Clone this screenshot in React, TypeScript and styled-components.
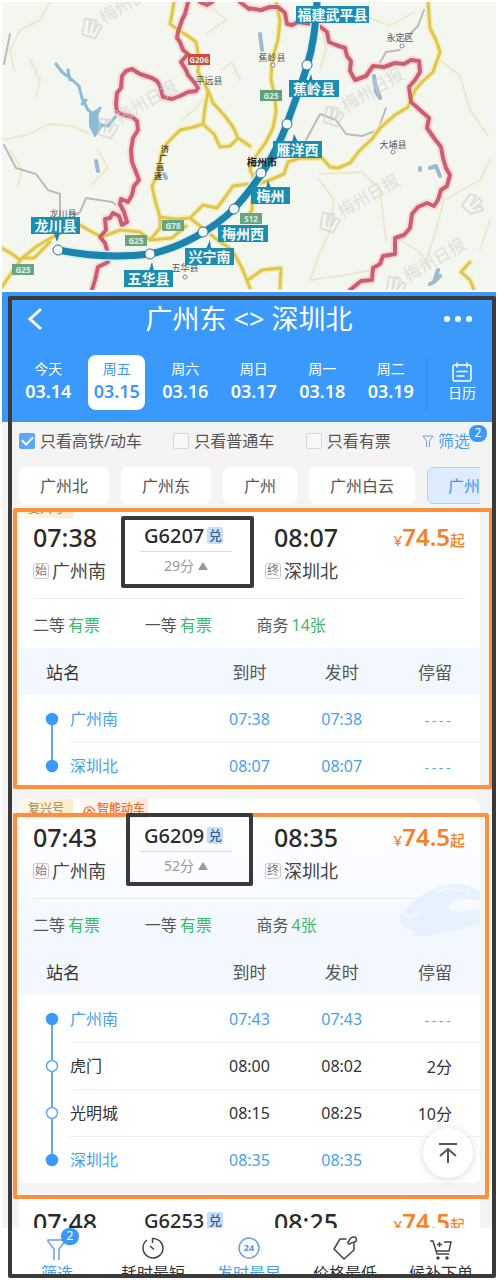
import React from "react";
import styled, { createGlobalStyle, css } from "styled-components";

const color = {
  blue: "#3b99fc",
  link: "#4a9ff0",
  ink: "#2b2b2b",
  text: "#555555",
  muted: "#999999",
  green: "#3dba6b",
  orange: "#f5822a",
  mark: "#ff8f3c",
  frame: "#3a3a3a",
  page: "#f4f4f4",
};

const Global = createGlobalStyle`
  * { box-sizing: border-box; }
  body {
    margin: 0;
    background: #fff;
    color: ${color.text};
    font-family: "Noto Sans", "Noto Sans CJK SC", sans-serif;
    font-size: 16px;
  }
  button { font: inherit; color: inherit; background: none; border: 0; padding: 0; margin: 0; cursor: pointer; }
  a { color: inherit; text-decoration: none; }
`;

const Page = styled.div`
  display: flex;
  flex-direction: column;
  gap: 2px;
  height: 100vh;
  padding: 2px;
`;

const MapSvg = styled.svg`
  display: block;
  width: 100%;
  height: auto;
  flex: none;
`;

const Phone = styled.main`
  position: relative;
  flex: 1;
  min-height: 0;
  display: flex;
  flex-direction: column;
  background: ${color.page};
  overflow: hidden;
`;

/* hand-drawn marker frames laid over the screen */
const Outline = styled.div<{ $c: string; $top: number; $left: number; $right?: number; $w?: number; $h?: number; $bottom?: number }>`
  position: absolute;
  pointer-events: none;
  border: 4px solid ${(p) => p.$c};
  border-radius: 2px;
  top: ${(p) => p.$top}px;
  left: ${(p) => p.$left}px;
  ${(p) => p.$right !== undefined && `right: ${p.$right}px;`}
  ${(p) => p.$bottom !== undefined && `bottom: ${p.$bottom}px;`}
  ${(p) => p.$w !== undefined && `width: ${p.$w}px;`}
  ${(p) => p.$h !== undefined && `height: ${p.$h}px;`}
`;

const Header = styled.header`
  flex: none;
  background: ${color.blue};
  color: #fff;
  padding-bottom: 12px;
`;

const TitleBar = styled.div`
  display: grid;
  grid-template-columns: 66px 1fr 66px;
  align-items: center;
  height: 54px;
  margin-bottom: 9px;
`;

const Title = styled.h1`
  margin: 0;
  font-size: 27px;
  font-weight: 400;
  line-height: 40px;
  text-align: center;
  white-space: nowrap;
`;

const IconButton = styled.button`
  display: grid;
  place-items: center;
  height: 40px;
`;

const DateBar = styled.div`
  display: flex;
  align-items: center;
  padding-left: 12px;
`;

const DateSlot = styled.div`
  flex: 1;
  display: flex;
  justify-content: center;
`;

const DateButton = styled.button<{ $on?: boolean }>`
  flex: none;
  width: 57px;
  height: 55px;
  border-radius: 8px;
  display: flex;
  flex-direction: column;
  align-items: center;
  padding-top: 4px;
  ${(p) => p.$on && css`background: #fff; color: ${color.blue};`}
`;

const DayName = styled.span`
  font-size: 14px;
  line-height: 20px;
`;

const DayDate = styled.span`
  font-size: 18px;
  font-weight: 600;
  line-height: 24px;
`;

const CalendarButton = styled.button`
  width: 71px;
  height: 55px;
  display: flex;
  flex-direction: column;
  align-items: center;
  justify-content: center;
  gap: 1px;
  font-size: 14px;
  line-height: 20px;
  border-left: 3px solid #3893f4;
`;

const FilterBar = styled.div`
  flex: none;
  display: flex;
  align-items: center;
  justify-content: space-between;
  height: 38px;
  margin-bottom: 7px;
  padding: 0 26px 0 17px;
  white-space: nowrap;
`;

const Check = styled.label`
  display: flex;
  align-items: center;
  gap: 5px;
  line-height: 24px;
`;

const Box = styled.input`
  appearance: none;
  width: 16px;
  height: 16px;
  margin: 0;
  border: 1px solid #d9d9d9;
  border-radius: 2px;
  background: #f8f8f8;
  display: grid;
  place-items: center;
  &:checked {
    background: #5aa7fb;
    border-color: #5aa7fb;
  }
  &:checked::after {
    content: "";
    width: 9px;
    height: 5px;
    margin-bottom: 3px;
    border-left: 2px solid #fff;
    border-bottom: 2px solid #fff;
    transform: rotate(-45deg);
  }
`;

const FilterButton = styled.button`
  position: relative;
  display: flex;
  align-items: center;
  gap: 4px;
  line-height: 24px;
  color: ${color.link};
`;

const Badge = styled.span`
  position: absolute;
  display: block;
  width: 18px;
  height: 17px;
  border-radius: 8px;
  background: ${color.blue};
  color: #fff;
  font-size: 12px;
  line-height: 16px;
  text-align: center;
`;

const FilterBadge = styled(Badge)`
  left: calc(100% - 1px);
  top: -4px;
`;

const Chips = styled.div`
  flex: none;
  display: flex;
  gap: 12px;
  margin: 0 16px 7px 17px;
  overflow: hidden;
`;

const Chip = styled.button<{ $on?: boolean }>`
  flex: none;
  height: 37px;
  padding: 0 20px 1px;
  border: 1px solid #fff;
  border-radius: 6px;
  background: #fff;
  white-space: nowrap;
  ${(p) => p.$on && css`background: #dcecfd; border-color: #a9d1fb; color: ${color.blue};`}
`;

const List = styled.section`
  flex: 1;
  min-height: 0;
  overflow: hidden;
  margin: 0 16px 0 17px;
`;

const Scrolled = styled.div`
  display: flex;
  flex-direction: column;
  gap: 10px;
  margin-top: -12px;
`;

const Card = styled.article<{ $smart?: boolean }>`
  border-radius: 8px;
  overflow: hidden;
  background: ${(p) => (p.$smart ? "linear-gradient(#ffffff 20px, #f3f8ff 140px, #ffffff 200px)" : "#fff")};
`;

const Tags = styled.div`
  display: flex;
  gap: 7px;
  height: 19px;
`;

const Tag = styled.span<{ $smart?: boolean }>`
  display: flex;
  align-items: center;
  justify-content: center;
  min-width: 54px;
  padding: 0 3px;
  font-size: 12px;
  line-height: 18px;
  color: ${(p) => (p.$smart ? "#e8712b" : "#a98345")};
  font-weight: ${(p) => (p.$smart ? 500 : 400)};
  background: ${(p) => (p.$smart ? "linear-gradient(90deg, #fff8f2, #fde6d8)" : "linear-gradient(90deg, #fff8ec, #fdeaca)")};
`;

const Trip = styled.div<{ $bare?: boolean }>`
  display: grid;
  grid-template-columns: 107fr 92fr 106fr 127fr;
  margin: 0 15px 0 14px;
  padding: ${(p) => (p.$bare ? "12px" : "2px")} 0 10px;
  border-bottom: 1px solid #e9ebee;
`;

const End = styled.div<{ $right?: boolean }>`
  display: flex;
  flex-direction: column;
  align-items: ${(p) => (p.$right ? "flex-end" : "flex-start")};
  white-space: nowrap;
`;

const Time = styled.strong`
  font-size: 25px;
  font-weight: 500;
  line-height: 34px;
  color: ${color.ink};
`;

const Station = styled.span`
  display: flex;
  align-items: center;
  gap: 3px;
  font-size: 18px;
  line-height: 34px;
  color: #444;
`;

const Mark = styled.small`
  display: block;
  width: 16px;
  height: 16px;
  border: 1px solid #c9c9c9;
  border-radius: 3px;
  font-size: 12px;
  line-height: 14px;
  text-align: center;
  color: #777;
`;

const Middle = styled.div`
  display: flex;
  flex-direction: column;
  white-space: nowrap;
`;

const TrainNo = styled.div`
  display: flex;
  align-items: center;
  gap: 3px;
  height: 32px;
  padding-left: 4px;
  font-size: 20px;
  font-weight: 500;
  color: ${color.ink};
  border-bottom: 1px solid #dcdcdc;
`;

const Redeem = styled.small`
  display: block;
  width: 16px;
  height: 17px;
  border-radius: 2px;
  background: #c5defc;
  color: #40608c;
  font-size: 13px;
  line-height: 16px;
  text-align: center;
`;

const Duration = styled.button`
  display: flex;
  align-items: center;
  justify-content: center;
  gap: 4px;
  font-size: 14px;
  line-height: 28px;
  color: ${color.muted};
`;

const Price = styled.div`
  display: flex;
  align-items: baseline;
  justify-content: flex-end;
  color: ${color.orange};
  font-size: 15px;
  font-weight: 500;
  line-height: 34px;
  white-space: nowrap;
`;

const Amount = styled.strong`
  font-size: 24px;
  font-weight: 600;
`;

const Seats = styled.div`
  position: relative;
  display: grid;
  grid-template-columns: 25% 25% 1fr;
  align-items: center;
  height: 49px;
  padding-left: 14px;
  white-space: nowrap;
`;

const Seat = styled.span`
  display: flex;
  gap: 3px;
`;

const Left = styled.span`
  color: ${color.green};
`;

const TrainArt = styled.svg`
  position: absolute;
  right: 0;
  bottom: 11px;
`;

const Stops = styled.table`
  width: 100%;
  table-layout: fixed;
  border-spacing: 0;
  background: #fff;
`;

const Head = styled.th<{ $align?: string }>`
  height: 47px;
  padding: 0;
  background: #f3f8ff;
  font-size: 17px;
  font-weight: 400;
  text-align: ${(p) => p.$align ?? "center"};
  &:first-child { width: 40%; padding-left: 27px; color: #333; }
  &:last-child { padding-right: 28px; }
`;

const StopRow = styled.tr<{ $on?: boolean }>`
  color: ${(p) => (p.$on ? color.link : "#333")};
`;

const Cell = styled.td<{ $first?: boolean; $align?: string }>`
  height: 47px;
  padding: 0;
  text-align: ${(p) => p.$align ?? "center"};
  border-top: 1px solid ${(p) => (p.$first ? "transparent" : "#f0f0f0")};
  &:last-child { padding-right: 28px; }
`;

const NoWait = styled.span`
  font-family: "Liberation Mono", monospace;
  font-size: 12px;
`;

const NameCell = styled.td`
  height: 47px;
  padding: 0;
`;

const NameWrap = styled.div`
  display: flex;
`;

const Rail = styled.svg`
  flex: none;
  display: block;
`;

const StopName = styled.span<{ $first?: boolean }>`
  flex: 1;
  line-height: 46px;
  border-top: 1px solid ${(p) => (p.$first ? "transparent" : "#f0f0f0")};
`;

const ToTop = styled.button`
  position: absolute;
  right: 23px;
  bottom: 100px;
  width: 50px;
  height: 50px;
  border-radius: 50%;
  background: #fff;
  box-shadow: 0 1px 8px rgba(0, 0, 0, 0.16);
  display: grid;
  place-items: center;
`;

const TabBar = styled.nav`
  flex: none;
  display: flex;
  height: 50px;
  padding: 8px 7px 0;
  background: #fff;
`;

const Tab = styled.a<{ $on?: boolean }>`
  position: relative;
  flex: 1;
  display: flex;
  flex-direction: column;
  align-items: center;
  gap: 1px;
  line-height: 24px;
  white-space: nowrap;
  color: ${(p) => (p.$on ? color.link : "#333")};
  svg { flex: none; }
`;

const TabBadge = styled(Badge)`
  left: 52px;
  top: -8px;
`;

/* ---------- map ---------- */

const BORDERS = [
  "M188 2 185 14 182 20 178 32 177 38 180 42 183 50 188 54 181 62 186 70 188 75 194 82 198 88 196 91 188 92 180 96 172 99 163 97 160 86 157 81 152 78 146 76 140 74 132 69 126 71 122 76 121 88 117 93 116 104 117 112 124 115 132 117 137 121 138 130 133 138 131 150 132 162 136 172 139 180 134 186 132 195 128 202 121 199 120 204 124 212 127 222 122 225 119 216 113 213 110 218 105 219 106 230 100 237 105 243 107 250 108 262 98 267 95 280 92 290",
  "M200 2 207 5 212 2 M240 2 249 9 M248 8 261 10 270 7 278 7 285 13 287 24 292 25 298 22 318 25 327 32 329 42 336 45 345 48 347 56 351 61 350 71 355 80 366 76 373 66 384 67 395 63 404 64 411 60 419 61 420 72 415 80 409 87 411 102 420 110 429 118 427 128 434 138 441 147 443 158 446 168 450 175 447 186 441 190 438 200 434 206 427 203 418 207 412 214 410 228 404 235 395 238 395 254 383 256 380 264 373 268 372 280 361 281 350 290",
];

const ROADS = [
  "M174 2 172 14 170 24 180 31 188 36 196 42 199 58 198 72 205 84 208 92 205 108 203 124 190 128 180 130 172 138 163 148 160 160 158 174 152 186 155 200 160 217 175 219 190 218 203 205 217 208 226 196 233 186 248 184",
  "M208 90 213 103 225 116 233 127 238 138 250 146 M203 124 214 134 220 147 230 146 238 138",
  "M276 2 280 20 278 40 272 60 271 80 275 96 276 112 273 128 266 142 256 156 250 170 258 184 270 180 284 174 288 162 300 158 322 158 330 167 338 168 350 163 360 150 372 139 380 128 395 115 408 107 415 90 422 82 433 72 440 52 436 40 430 28 428 2",
  "M2 248 12 254 20 260 37 246 58 234 80 225 92 232 102 237 120 230 140 232 150 240 160 228 160 217 M2 287 12 272 22 258 34 258 50 242",
  "M190 218 215 238 232 250 242 268 250 288 M253 176 252 210 244 222",
  "M248 280 262 270 281 268 280 288 M470 262 461 272 470 280 474 290 M150 240 172 238 186 226",
];

const FAINT = [
  "M50 2 40 20 20 30 10 50 14 70 M30 60 40 80 36 96 M2 140 30 134 48 124 72 126 90 134 M10 150 22 170 18 186 M182 120 196 108 204 98",
  "M322 30 326 50 320 70 M370 18 390 26 414 12 M440 60 460 76 470 110 488 136 M318 178 334 200 330 230 320 252 310 280 M320 174 362 172 380 190 386 240 M310 280 340 276 372 270 M426 262 436 230 444 200 480 180 490 160",
  "M400 240 420 252 430 270 M480 250 490 220 M98 150 108 168 92 184 M222 70 232 62 240 80 M210 6 226 20 206 34",
];

const GREYS = [
  "M4 145 16 168 36 174 48 190 60 194 60 226 M62 224 80 212 86 198 112 202 118 206",
  "M424 10 418 26 404 40 M400 50 386 52 378 66 M306 140 320 114 336 120 346 134 362 136 378 130 386 108",
  "M10 34 4 64 M70 212 78 214",
];

const LINE_STATIONS: [number, number][] = [
  [307, 65], [287, 124], [261, 173], [234, 209], [203, 232], [150, 254], [58, 250],
];

const LINE_LABELS: [number, number, number, string][] = [
  [296, 6, 73, "福建武平县"],
  [289, 80, 50, "蕉岭县"],
  [273, 141, 49, "雁洋西"],
  [251, 187, 39, "梅州"],
  [218, 225, 50, "梅州西"],
  [185, 248, 49, "兴宁南"],
  [124, 270, 49, "五华县"],
  [31, 217, 49, "龙川县"],
];

const PLACES: [number, number, string][] = [
  [209, 84, "平远县"], [272, 61, "蕉岭县"], [400, 41, "永定区"], [393, 148, "大埔县"],
  [63, 217, "龙川县"], [185, 271, "五华县"],
];

const SHIELDS: [number, number, string, string][] = [
  [188, 54, "G206", "#d0493b"], [260, 90, "G25", "#5fa07a"], [125, 235, "G25", "#6aa583"],
  [162, 220, "G78", "#6aa583"], [240, 213, "S12", "#6aa583"], [12, 264, "G25", "#6aa583"],
];

const WATERMARKS: [number, number][] = [[104, 24], [342, 218], [120, 124], [408, 282], [346, 112]];

const RAILWAY = "M317 2C316 24 314 44 307 66 302 84 292 108 287 124 276 152 262 178 234 209 212 230 180 248 150 254 118 258 88 256 58 250";

function RouteMap() {
  return (
    <MapSvg viewBox="2 2 494 288" role="img" aria-label="梅州铁路线路图">
      <rect x="2" y="2" width="494" height="288" fill="#f4f6f0" />
      <g fill="none" strokeLinejoin="round" strokeLinecap="round">
        {FAINT.map((d) => <path key={d} d={d} stroke="#ebeacd" strokeWidth="2" />)}
        {GREYS.map((d) => <path key={d} d={d} stroke="#b9bcbb" strokeWidth="2" />)}
        <path d="M56 64 62 72 70 78 79 86 82 98 88 110 96 116 100 108 M68 70 70 80 M86 100 82 104 M96 124 108 126 116 116" stroke="#8dbbd6" strokeWidth="3" />
        <path d="M90 114 97 110 98 122 102 126 95 136 90 126Z" fill="#8dbbd6" stroke="#8dbbd6" strokeWidth="2" />
        <path d="M374 76 376 92 380 98 376 86M260 34 262 50M430 168 436 166 440 176M420 168v2M438 270 434 282 430 284M440 276l-4 4M96 161l2 10M164 174l2 4" stroke="#9bbad0" strokeWidth="4" />
        {BORDERS.map((d) => <path key={d} d={d} stroke="#f8dcd9" strokeWidth="8" />)}
        {ROADS.map((d) => <path key={d} d={d} stroke="#f5eeb4" strokeWidth="6" />)}
        {ROADS.map((d) => <path key={d} d={d} stroke="#dfc653" strokeWidth="3" />)}
        {BORDERS.map((d) => <path key={d} d={d} stroke="#c95f70" strokeWidth="4" />)}
      </g>
      {WATERMARKS.map(([x, y]) => (
        <g key={`${x}-${y}`} transform={`rotate(-30 ${x} ${y})`} fill="#cfd3d1" opacity="0.6">
          <path d={`M${x - 24} ${y - 2} l10 -12 4 3 -8 11 10 -10 3 3 -9 9 9 -5 2 4 -12 7z`} fill="none" stroke="#cfd3d1" strokeWidth="2" />
          <text x={x} y={y} fontSize="17">梅州日报</text>
        </g>
      ))}
      <path d="M462 206l8-12 6 2-6 10 9-8 3 4-9 7 9-3 1 4-12 4z" fill="none" stroke="#dcdfdc" strokeWidth="2" />
      <path d={RAILWAY} fill="none" stroke="#d8eef3" strokeWidth="10" />
      <path d={RAILWAY} fill="none" stroke="#1b83ac" strokeWidth="7" />
      {SHIELDS.map(([x, y, t, c]) => (
        <g key={`${x}-${y}`}>
          <rect x={x} y={y} width="22" height="11" fill={c} />
          <text x={x + 11} y={y + 9} fontSize="8" fontWeight="700" textAnchor="middle" fill="#dcefe0">{t}</text>
        </g>
      ))}
      <g fill="#555" fontSize="9" textAnchor="middle">
        {PLACES.map(([x, y, t]) => <text key={`${x}-${y}`} x={x} y={y}>{t}</text>)}
        <text x="262" y="166" fontSize="10" fontWeight="700" fill="#222">梅州市</text>
        <g fontSize="8" fontWeight="700" fill="#4d4a2c">
          <text x="165" y="152">济</text>
          <text x="163" y="161">广</text>
          <text x="160" y="170">高</text>
          <text x="158" y="179">速</text>
        </g>
      </g>
      <g fill="#fff" stroke="#888" strokeWidth="1">
        <circle cx="273" cy="65" r="2" />
        <circle cx="402" cy="46" r="2" />
        <circle cx="393" cy="152" r="2" />
        <circle cx="185" cy="277" r="2" />
      </g>
      <path d="M311 74l2 8h-5zM294 134l4 8h-6zM268 180l3 8h-5zM210 240l1 9h-5zM152 262l2 9h-5zM57 242l3-9h-6z" fill="#1b83ac" />
      {LINE_STATIONS.map(([x, y]) => <circle key={x} cx={x} cy={y} r="5" fill="#effafa" stroke="#3f6f80" strokeWidth="1" />)}
      {LINE_LABELS.map(([x, y, w, t]) => (
        <g key={t}>
          <rect x={x} y={y} width={w} height="17" fill="#1b8db0" />
          <text x={x + w / 2} y={y + 14} fontSize="14" fontWeight="700" textAnchor="middle" fill="#f2fcff">{t}</text>
        </g>
      ))}
    </MapSvg>
  );
}

/* ---------- data ---------- */

type Stop = [name: string, arrive: string, leave: string, wait: string];
type Train = {
  no: string; from: string; to: string; duration: string;
  tags: string[]; seats: [string, string][]; stops: Stop[];
};

const TRAINS: Train[] = [
  {
    no: "G6207", from: "07:38", to: "08:07", duration: "29分", tags: ["复兴号"],
    seats: [["二等", "有票"], ["一等", "有票"], ["商务", "14张"]],
    stops: [["广州南", "07:38", "07:38", "----"], ["深圳北", "08:07", "08:07", "----"]],
  },
  {
    no: "G6209", from: "07:43", to: "08:35", duration: "52分", tags: ["复兴号", "智能动车"],
    seats: [["二等", "有票"], ["一等", "有票"], ["商务", "4张"]],
    stops: [
      ["广州南", "07:43", "07:43", "----"], ["虎门", "08:00", "08:02", "2分"],
      ["光明城", "08:15", "08:25", "10分"], ["深圳北", "08:35", "08:35", "----"],
    ],
  },
  { no: "G6253", from: "07:48", to: "08:25", duration: "37分", tags: [], seats: [], stops: [] },
];

const DAYS = [["今天", "03.14"], ["周五", "03.15"], ["周六", "03.16"], ["周日", "03.17"], ["周一", "03.18"], ["周二", "03.19"]];

function TrainCard({ train }: { train: Train }) {
  const smart = train.tags.length > 1;
  return (
    <Card $smart={smart}>
      {train.tags.length > 0 && (
        <Tags>
          {train.tags.map((t, i) => (
            <Tag key={t} $smart={i === 1}>
              {i === 1 && (
                <svg width="14" height="12" viewBox="0 0 14 12" fill="none" stroke="#e8712b" strokeWidth="1.2">
                  <path d="M1 10C1 5 4 3 8 4l4 4M1 10h3l2-3 3 3h4M4 6l4 1" />
                </svg>
              )}
              {t}
            </Tag>
          ))}
        </Tags>
      )}
      <Trip $bare={train.tags.length === 0}>
        <End>
          <Time>{train.from}</Time>
          <Station><Mark>始</Mark>广州南</Station>
        </End>
        <Middle>
          <TrainNo>{train.no}<Redeem>兑</Redeem></TrainNo>
          <Duration>
            {train.duration}
            <svg width="10" height="8" viewBox="0 0 10 8"><path d="M5 0 10 8H0z" fill="#999" /></svg>
          </Duration>
        </Middle>
        <End $right>
          <Time>{train.to}</Time>
          <Station><Mark>终</Mark>深圳北</Station>
        </End>
        <Price>¥<Amount>74.5</Amount>起</Price>
      </Trip>
      {train.seats.length > 0 && (
        <Seats>
          {smart && (
            <TrainArt width="80" height="54" viewBox="0 0 80 54">
              <path d="M2 30C14 16 34 2 54 1c10 0 20 3 26 7v10c-12-3-24-3-30 3-4 5 2 8 8 8l22-3v15C58 46 44 52 14 53c-4 0-2-3 0-5C2 46-4 38 2 30z" fill="#e8f2fe" />
              <path d="M4 30c4 6 12 4 16-2M36 8c14-4 26-2 34 4" fill="none" stroke="#f3f8ff" strokeWidth="2" />
            </TrainArt>
          )}
          {train.seats.map(([k, v]) => <Seat key={k}>{k}<Left>{v}</Left></Seat>)}
        </Seats>
      )}
      {train.stops.length > 0 && (
        <Stops>
          <thead>
            <tr>
              <Head $align="left">站名</Head><Head>到时</Head><Head>发时</Head><Head $align="right">停留</Head>
            </tr>
          </thead>
          <tbody>
            {train.stops.map(([name, arrive, leave, wait], i) => {
              const first = i === 0;
              const last = i === train.stops.length - 1;
              const end = first || last;
              return (
                <StopRow key={name} $on={end}>
                  <NameCell>
                    <NameWrap>
                      <Rail width="51" height="47" viewBox="0 0 51 47">
                        <path d={`M33 ${first ? 24 : 0}V${last ? 24 : 47}`} stroke="#5fabf3" strokeWidth="2" />
                        <circle cx="33" cy="24" r="5.5" fill={end ? color.blue : "#fff"} stroke={end ? color.blue : "#5fabf3"} strokeWidth="1.5" />
                      </Rail>
                      <StopName $first={first}>{name}</StopName>
                    </NameWrap>
                  </NameCell>
                  <Cell $first={first}>{arrive}</Cell>
                  <Cell $first={first}>{leave}</Cell>
                  <Cell $first={first} $align="right">{end ? <NoWait>{wait}</NoWait> : wait}</Cell>
                </StopRow>
              );
            })}
          </tbody>
        </Stops>
      )}
    </Card>
  );
}

export default function App() {
  return (
    <>
      <Global />
      <Page>
        <RouteMap />
        <Phone>
          <Header>
            <TitleBar>
              <IconButton aria-label="返回">
                <svg width="16" height="24" viewBox="0 0 16 24" fill="none" stroke="#fff" strokeWidth="3">
                  <path d="M14 2 3 12l11 10" />
                </svg>
              </IconButton>
              <Title>广州东 &lt;&gt; 深圳北</Title>
              <IconButton aria-label="更多">
                <svg width="48" height="8" viewBox="0 0 48 8" fill="#fff">
                  <circle cx="8" cy="4" r="3" /><circle cx="19" cy="4" r="3" /><circle cx="30" cy="4" r="3" />
                </svg>
              </IconButton>
            </TitleBar>
            <DateBar>
              {DAYS.map(([d, n], i) => (
                <DateSlot key={n}>
                  <DateButton $on={i === 1}><DayName>{d}</DayName><DayDate>{n}</DayDate></DateButton>
                </DateSlot>
              ))}
              <CalendarButton>
                <svg width="20" height="20" viewBox="0 0 20 20" fill="none" stroke="#fff" strokeWidth="1.5" strokeLinecap="round">
                  <rect x="1" y="3" width="18" height="16" rx="2" />
                  <path d="M5 1v4M15 1v4M5 9.500h10M5 14h7" />
                </svg>
                日历
              </CalendarButton>
            </DateBar>
          </Header>

          <FilterBar>
            <Check><Box type="checkbox" defaultChecked />只看高铁/动车</Check>
            <Check><Box type="checkbox" />只看普通车</Check>
            <Check><Box type="checkbox" />只看有票</Check>
            <FilterButton>
              <svg width="12" height="13" viewBox="0 0 12 13" fill="none" stroke="#6f9df0" strokeWidth="1">
                <path d="M4.500 12V6L1 1h10L7.500 6v6" />
              </svg>
              筛选
              <FilterBadge>2</FilterBadge>
            </FilterButton>
          </FilterBar>

          <Chips>
            <Chip>广州北</Chip>
            <Chip>广州东</Chip>
            <Chip>广州</Chip>
            <Chip>广州白云</Chip>
            <Chip $on>广州南</Chip>
          </Chips>

          <List>
            <Scrolled>
              {TRAINS.map((t) => <TrainCard key={t.no} train={t} />)}
            </Scrolled>
          </List>

          <TabBar>
            <Tab href="#filter" $on>
              <svg width="24" height="24" viewBox="0 0 24 24" fill="none" stroke="#6f9df0" strokeWidth="1.5">
                <path d="M9 24V13L3 5.500V4h17v1.500L14 13v11" />
              </svg>
              筛选
              <TabBadge>2</TabBadge>
            </Tab>
            <Tab href="#fast">
              <svg width="24" height="24" viewBox="0 0 24 24" fill="none" stroke="#444" strokeWidth="1.5">
                <path d="M11.500 7V2.500C17 2 22 6.500 22 12a10 10 0 1 1-16-8M9 10l4 3.500" />
              </svg>
              耗时最短
            </Tab>
            <Tab href="#early" $on>
              <svg width="24" height="24" viewBox="0 0 24 24" fill="none">
                <circle cx="12" cy="12" r="10" stroke="#6f9df0" strokeWidth="1.500" />
                <text x="12" y="15" fontSize="9" fontWeight="700" textAnchor="middle" fill="#5b8ff0">24</text>
              </svg>
              发时最早
            </Tab>
            <Tab href="#cheap">
              <svg width="26" height="24" viewBox="0 0 26 24" fill="none" stroke="#444" strokeWidth="1.500" strokeLinejoin="round" strokeLinecap="round">
                <path d="M17 8c-1 0-2-2 0-3 1-3 3-4 5-4 3 0 3 4 1 5s-4 0-5 2M14 3 8 3 2 13l10 10 10-9V8" />
              </svg>
              价格最低
            </Tab>
            <Tab href="#waitlist">
              <svg width="24" height="24" viewBox="0 0 24 24" fill="none" stroke="#444" strokeWidth="1.500">
                <path d="M1 5h3l4 13h12M15 6h7l-2 9H7.500M8 8.500h5M10.500 6v5" />
                <circle cx="9" cy="22" r="1" fill="#444" /><circle cx="18" cy="22" r="1" fill="#444" />
              </svg>
              候补下单
            </Tab>
          </TabBar>

          <ToTop aria-label="回到顶部">
            <svg width="20" height="22" viewBox="0 0 20 22" fill="none" stroke="#555" strokeWidth="2">
              <path d="M1 2h18M10 21V7M2 14l8-7 8 7" />
            </svg>
          </ToTop>

          <Outline $c={color.mark} $top={216} $left={11} $right={3} $h={281} />
          <Outline $c={color.mark} $top={521} $left={11} $right={7} $h={386} />
          <Outline $c={color.frame} $top={224} $left={119} $w={133} $h={72} />
          <Outline $c={color.frame} $top={521} $left={124} $w={127} $h={73} />
          <Outline $c={color.frame} $top={4} $left={6} $right={0} $bottom={0} />
        </Phone>
      </Page>
    </>
  );
}
